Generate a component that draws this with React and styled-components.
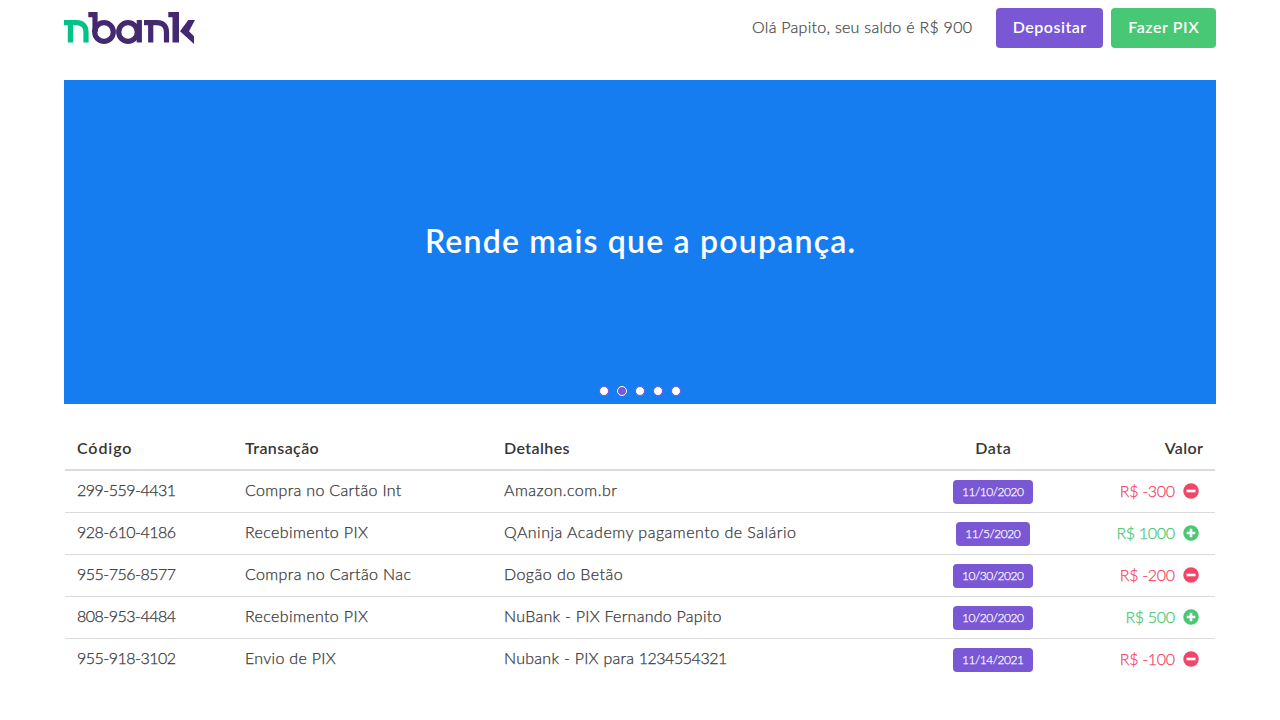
import React from "react";
import styled, { createGlobalStyle } from "styled-components";

const GlobalStyle = createGlobalStyle`
  * { box-sizing: border-box; }
  body {
    margin: 0;
    background: #fff;
    color: #363636;
    font-family: Lato, "Liberation Sans", sans-serif;
    font-size: 16px;
    font-weight: 300;
    line-height: 24px;
    overflow: hidden;
  }
`;

const Container = styled.div`
  width: 1152px;
  margin: 0 auto;
`;

const Navbar = styled.header`
  display: flex;
  align-items: center;
  justify-content: space-between;
  height: 56px;
`;

const Logo = styled.svg`
  display: block;
  width: 132px;
  height: 32px;
`;

const Actions = styled.div`
  display: flex;
  align-items: center;
  gap: 8px;
`;

const Label = styled.span`
  display: inline-block;
  white-space: pre;
  letter-spacing: ${(p) => p.$track || 0}px;
  margin-right: ${(p) => -(p.$track || 0)}px;
  -webkit-text-stroke: ${(p) => (p.$strong ? 0 : 0.25)}px currentColor;
`;

const Greeting = styled.div`
  margin-right: 16px;
  padding-bottom: 2px;
  color: #4a4a4a;
`;

const Button = styled.button`
  width: ${(p) => p.$width}px;
  height: 40px;
  padding: 0 0 2px;
  border: 0;
  border-radius: 4px;
  background: ${(p) => p.$color};
  color: #fff;
  font: 600 16px/24px Lato, sans-serif;
`;

const Banner = styled.section`
  display: grid;
  grid-template-rows: 1fr 26px;
  height: 324px;
  margin-top: 24px;
  padding-top: 24px;
  background: #167df0;
  justify-items: center;
`;

const BannerTitle = styled.h1`
  align-self: center;
  margin: 0;
  color: #fff;
  font-size: 32px;
  font-weight: 600;
  line-height: 36px;
`;

const Dots = styled.div`
  display: flex;
  gap: 8px;
  padding-top: 8px;
`;

const Dot = styled.span`
  width: 10px;
  height: 10px;
  border: 1px solid ${(p) => (p.$active ? "#fff" : "#7957d5")};
  border-radius: 50%;
  background: ${(p) => (p.$active ? "#7957d5" : "#fff")};
`;

const Table = styled.table`
  width: 1150px;
  margin: 24px auto 0;
  border-collapse: collapse;
  table-layout: fixed;
`;

const HeadCell = styled.th`
  width: ${(p) => p.$width}px;
  height: 42px;
  padding: 0 12px 2px;
  border-bottom: 2px solid #dbdbdb;
  font-weight: 600;
  text-align: ${(p) => p.$align || "left"};
`;

const Row = styled.tr`
  height: 42px;
  & + & { border-top: 1px solid #dbdbdb; }
`;

const Cell = styled.td`
  padding: 0 12px ${(p) => (p.$raised ? 2 : 0)}px;
  text-align: ${(p) => p.$align || "left"};
`;

const Tag = styled.span`
  display: inline-flex;
  align-items: center;
  justify-content: center;
  width: ${(p) => p.$width}px;
  height: 24px;
  border-radius: 4px;
  background: #7957d5;
  color: #fff;
  font-size: 12px;
  vertical-align: middle;
`;

const Amount = styled.div`
  display: flex;
  align-items: center;
  justify-content: flex-end;
  gap: 8px;
  padding-right: 4px;
  color: ${(p) => p.$color};
`;

const SignIcon = styled.svg`
  display: block;
  width: 16px;
  height: 16px;
`;

const rows = [
  { code: "299-559-4431", kind: ["Compra no Cartão Int", 0.34], detail: ["Amazon.com.br", 0.5], date: "11/10/2020", tag: 80, value: "R$ -300", plus: false },
  { code: "928-610-4186", kind: ["Recebimento PIX", 0.38], detail: ["QAninja Academy pagamento de Salário", 0.49], date: "11/5/2020", tag: 74, value: "R$ 1000", plus: true },
  { code: "955-756-8577", kind: ["Compra no Cartão Nac", 0.38], detail: ["Dogão do Betão", 0.46], date: "10/30/2020", tag: 80, value: "R$ -200", plus: false },
  { code: "808-953-4484", kind: ["Recebimento PIX", 0.38], detail: ["NuBank - PIX Fernando Papito", 0.26], date: "10/20/2020", tag: 80, value: "R$ 500", plus: true },
  { code: "955-918-3102", kind: ["Envio de PIX", 0.3], detail: ["Nubank - PIX para ", 0.26], account: "1234554321", date: "11/14/2021", tag: 80, value: "R$ -100", plus: false },
];

function Brand() {
  return (
    <Logo viewBox="0 0 132 32" role="img" aria-label="nbank">
      <g fill="none" stroke="#00c389" strokeWidth="5.2">
        <path d="M0 10.6H12.5C18.5 10.6 22 14 22 20V30.5" />
        <path d="M6.4 10V30.5" />
      </g>
      <g fill="none" stroke="#432a70" strokeWidth="5.2">
        <path d="M24.3 2.6H31V20" />
        <circle cx="40" cy="20" r="9.3" />
        <circle cx="64" cy="20" r="9.3" />
        <path d="M75.3 8V30.5" />
        <path d="M80 10.6H93C99 10.6 102.5 14 102.5 20V30.5" />
        <path d="M86.7 10V30.5" />
      </g>
      <path d="M104.3 0H115V30.5H108.5V5.2H104.3Z" fill="#432a70" />
      <path d="M131 8H124.3L116 19.3L130 32V24.2L125 19.3Z" fill="#432a70" />
    </Logo>
  );
}

function Sign({ plus }) {
  return (
    <SignIcon viewBox="0 0 16 16">
      <circle cx="8" cy="8" r="7.75" fill="currentColor" />
      <path d={plus ? "M3.7 8H12.3M8 3.7V12.3" : "M3.5 8H12.5"} stroke="#fff" strokeWidth="2.6" />
    </SignIcon>
  );
}

export default function App() {
  return (
    <Container>
      <GlobalStyle />
      <Navbar>
        <Brand />
        <Actions>
          <Greeting><Label $track={0.28}>Olá Papito, seu saldo é R$ 900</Label></Greeting>
          <Button $width={107} $color="#7957d5"><Label $strong $track={0.48}>Depositar</Label></Button>
          <Button $width={105} $color="#48c774"><Label $strong $track={0.55}>Fazer PIX</Label></Button>
        </Actions>
      </Navbar>
      <Banner>
        <BannerTitle><Label $strong $track={1.2}>Rende mais que a poupança.</Label></BannerTitle>
        <Dots>
          {[0, 1, 2, 3, 4].map((i) => <Dot key={i} $active={i === 1} />)}
        </Dots>
      </Banner>
      <Table>
        <thead>
          <tr>
            <HeadCell $width={168}><Label $strong $track={0.9}>Código</Label></HeadCell>
            <HeadCell $width={259}><Label $strong $track={0.4}>Transação</Label></HeadCell>
            <HeadCell $width={417}><Label $strong $track={0.4}>Detalhes</Label></HeadCell>
            <HeadCell $width={168} $align="center"><Label $strong $track={0.6}>Data</Label></HeadCell>
            <HeadCell $width={138} $align="right"><Label $strong $track={0.4}>Valor</Label></HeadCell>
          </tr>
        </thead>
        <tbody>
          {rows.map((r) => (
            <Row key={r.code}>
              <Cell $raised><Label $track={-0.5}>{r.code}</Label></Cell>
              <Cell $raised><Label $track={r.kind[1]}>{r.kind[0]}</Label></Cell>
              <Cell $raised>
                <Label $track={r.detail[1]}>{r.detail[0]}</Label>
                {r.account && <Label $track={-0.45}>{r.account}</Label>}
              </Cell>
              <Cell $align="center"><Tag $width={r.tag}><Label $track={-0.48}>{r.date}</Label></Tag></Cell>
              <Cell>
                <Amount $color={r.plus ? "#48c774" : "#f14668"}>
                  <Label $track={-0.32}>{r.value}</Label>
                  <Sign plus={r.plus} />
                </Amount>
              </Cell>
            </Row>
          ))}
        </tbody>
      </Table>
    </Container>
  );
}
